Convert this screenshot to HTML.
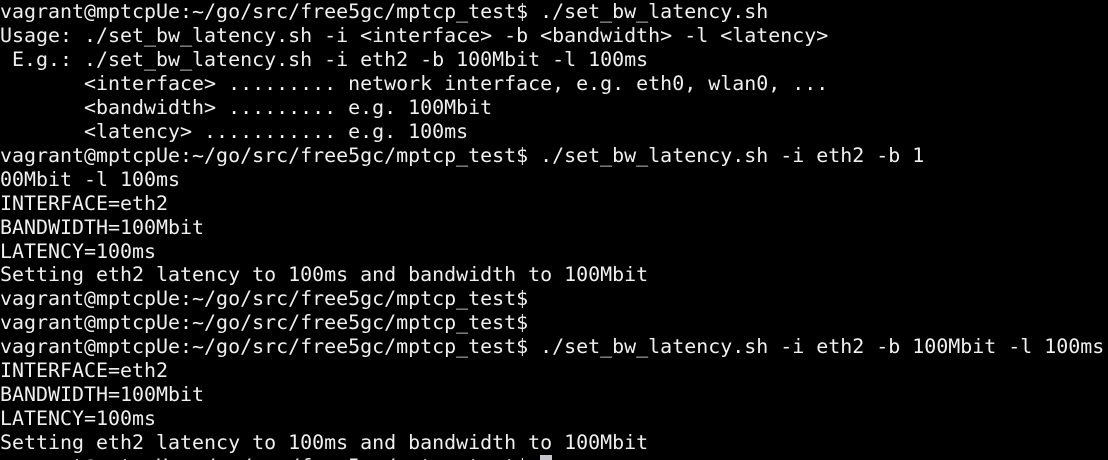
<!DOCTYPE html>
<html><head><meta charset="utf-8"><style>
html,body{margin:0;padding:0;background:#000;width:1108px;height:460px;overflow:hidden;position:relative}
pre{margin:0;position:absolute;left:0;top:0;font-family:"DejaVu Sans Mono","Liberation Mono",monospace;font-size:19.95px;line-height:23.95px;color:#f0f0f0;white-space:pre}
.cur{position:absolute;left:540px;top:455px;width:12px;height:6px;background:#c4c4cc}
</style></head><body>
<pre>vagrant@mptcpUe:~/go/src/free5gc/mptcp_test$ ./set_bw_latency.sh
Usage: ./set_bw_latency.sh -i &lt;interface&gt; -b &lt;bandwidth&gt; -l &lt;latency&gt;
 E.g.: ./set_bw_latency.sh -i eth2 -b 100Mbit -l 100ms
       &lt;interface&gt; ......... network interface, e.g. eth0, wlan0, ...
       &lt;bandwidth&gt; ......... e.g. 100Mbit
       &lt;latency&gt; ........... e.g. 100ms
vagrant@mptcpUe:~/go/src/free5gc/mptcp_test$ ./set_bw_latency.sh -i eth2 -b 1
00Mbit -l 100ms
INTERFACE=eth2
BANDWIDTH=100Mbit
LATENCY=100ms
Setting eth2 latency to 100ms and bandwidth to 100Mbit
vagrant@mptcpUe:~/go/src/free5gc/mptcp_test$
vagrant@mptcpUe:~/go/src/free5gc/mptcp_test$
vagrant@mptcpUe:~/go/src/free5gc/mptcp_test$ ./set_bw_latency.sh -i eth2 -b 100Mbit -l 100ms
INTERFACE=eth2
BANDWIDTH=100Mbit
LATENCY=100ms
Setting eth2 latency to 100ms and bandwidth to 100Mbit
vagrant@mptcpUe:~/go/src/free5gc/mptcp_test$</pre>
<div class="cur"></div>
</body></html>
